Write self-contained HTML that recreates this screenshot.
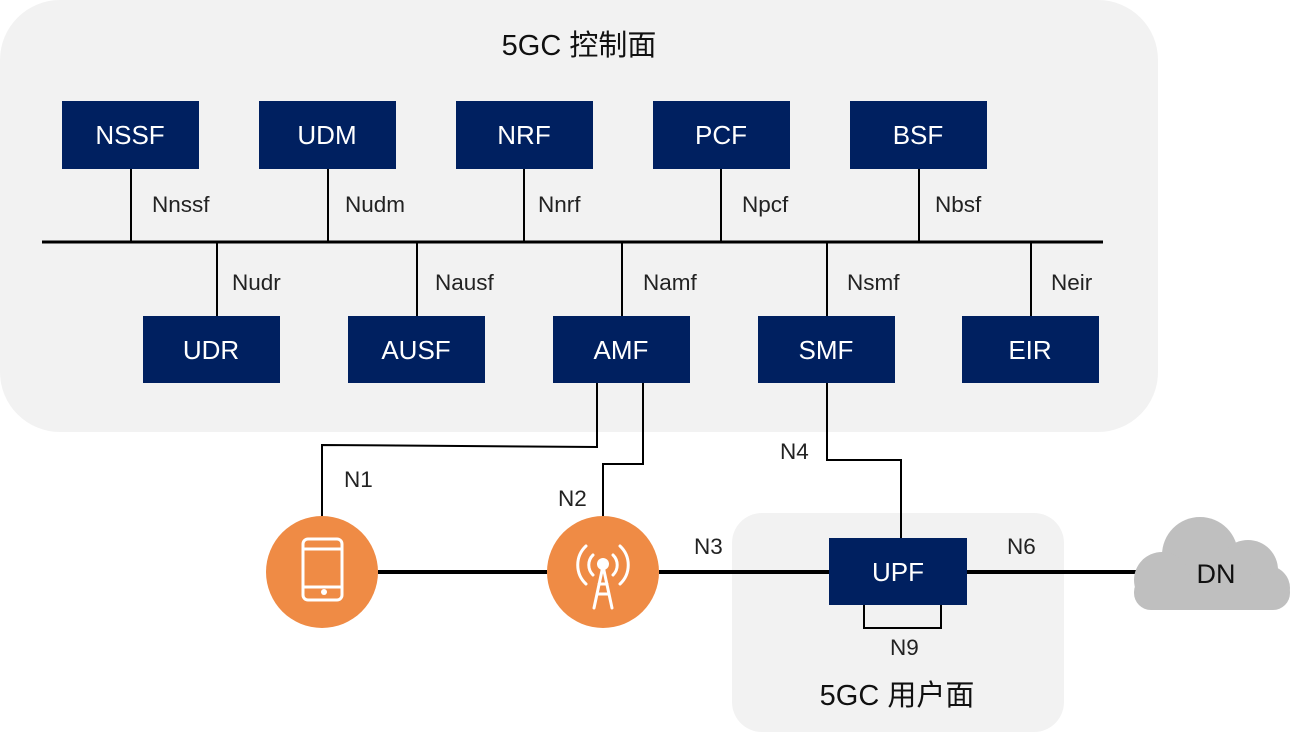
<!DOCTYPE html>
<html><head><meta charset="utf-8"><style>
body{margin:0;background:#fff;}
svg{display:block;font-family:"Liberation Sans","Noto Sans CJK SC",sans-serif;}
.b{fill:#002060}
.t{fill:#fff;font-size:26px;text-anchor:middle}
.l{fill:#222;font-size:22.5px}
</style></head><body>
<svg width="1294" height="732" viewBox="0 0 1294 732">
<rect x="0" y="0" width="1158" height="432" rx="60" fill="#f2f2f2"/>
<rect x="732" y="513" width="332" height="219" rx="30" fill="#f2f2f2"/>
<text x="579" y="55" font-size="29" text-anchor="middle" fill="#111">5GC 控制面</text>
<text x="897" y="705" font-size="29" text-anchor="middle" fill="#111">5GC 用户面</text>
<g stroke="#000" stroke-width="2" fill="none">
<path d="M131 169V242M328 169V242M524 169V242M721 169V242M919 169V242"/>
<path d="M217 242V316M417 242V316M622 242V316M827 242V316M1031 242V316"/>
<path d="M597 383V447L322 445V517"/>
<path d="M643 383V464H603V517"/>
<path d="M827 383V460H901V538"/>
<path d="M864 605V628H941V605"/>
</g>
<line x1="42" y1="242" x2="1103" y2="242" stroke="#000" stroke-width="3"/>
<g stroke="#000" stroke-width="4">
<line x1="378" y1="572" x2="547" y2="572"/>
<line x1="659" y1="572" x2="829" y2="572"/>
<line x1="967" y1="572" x2="1140" y2="572"/>
</g>
<rect class="b" x="62" y="101" width="137" height="68"/><text class="t" x="130" y="144">NSSF</text>
<rect class="b" x="259" y="101" width="137" height="68"/><text class="t" x="327" y="144">UDM</text>
<rect class="b" x="456" y="101" width="137" height="68"/><text class="t" x="524" y="144">NRF</text>
<rect class="b" x="653" y="101" width="137" height="68"/><text class="t" x="721" y="144">PCF</text>
<rect class="b" x="850" y="101" width="137" height="68"/><text class="t" x="918" y="144">BSF</text>
<rect class="b" x="143" y="316" width="137" height="67"/><text class="t" x="211" y="359">UDR</text>
<rect class="b" x="348" y="316" width="137" height="67"/><text class="t" x="416" y="359">AUSF</text>
<rect class="b" x="553" y="316" width="137" height="67"/><text class="t" x="621" y="359">AMF</text>
<rect class="b" x="758" y="316" width="137" height="67"/><text class="t" x="826" y="359">SMF</text>
<rect class="b" x="962" y="316" width="137" height="67"/><text class="t" x="1030" y="359">EIR</text>
<rect class="b" x="829" y="538" width="138" height="67"/><text class="t" x="898" y="581">UPF</text>
<text class="l" x="152" y="212">Nnssf</text>
<text class="l" x="345" y="212">Nudm</text>
<text class="l" x="538" y="212">Nnrf</text>
<text class="l" x="742" y="212">Npcf</text>
<text class="l" x="935" y="212">Nbsf</text>
<text class="l" x="232" y="290">Nudr</text>
<text class="l" x="435" y="290">Nausf</text>
<text class="l" x="643" y="290">Namf</text>
<text class="l" x="847" y="290">Nsmf</text>
<text class="l" x="1051" y="290">Neir</text>
<text class="l" x="344" y="487">N1</text>
<text class="l" x="558" y="506">N2</text>
<text class="l" x="694" y="554">N3</text>
<text class="l" x="780" y="459">N4</text>
<text class="l" x="1007" y="554">N6</text>
<text class="l" x="890" y="655">N9</text>
<circle cx="322" cy="572" r="56" fill="#ef8b45"/>
<circle cx="603" cy="572" r="56" fill="#ef8b45"/>
<g stroke="#fff" stroke-width="3" fill="none" stroke-linecap="round">
<rect x="303" y="539" width="39" height="61" rx="5"/>
<path d="M303 549H342M303 587H342"/>
<path d="M594 608L603 566L612 608M597 594H609M599 584H607"/>
<path d="M593 555a14 14 0 0 0 0 20M613 555a14 14 0 0 1 0 20M586 546a26 26 0 0 0 0 38M620 546a26 26 0 0 1 0 38"/>
</g>
<circle cx="324" cy="592" r="3" fill="#fff"/>
<circle cx="603" cy="564" r="6" fill="#fff"/>
<g fill="#bfbfbf">
<circle cx="1200" cy="555" r="38"/>
<circle cx="1248" cy="570" r="30"/>
<circle cx="1162" cy="580" r="28"/>
<circle cx="1268" cy="588" r="22"/>
<rect x="1134" y="575" width="156" height="35" rx="17"/>
</g>
<text x="1216" y="583" font-size="27" text-anchor="middle" fill="#111">DN</text>
</svg>
</body></html>
